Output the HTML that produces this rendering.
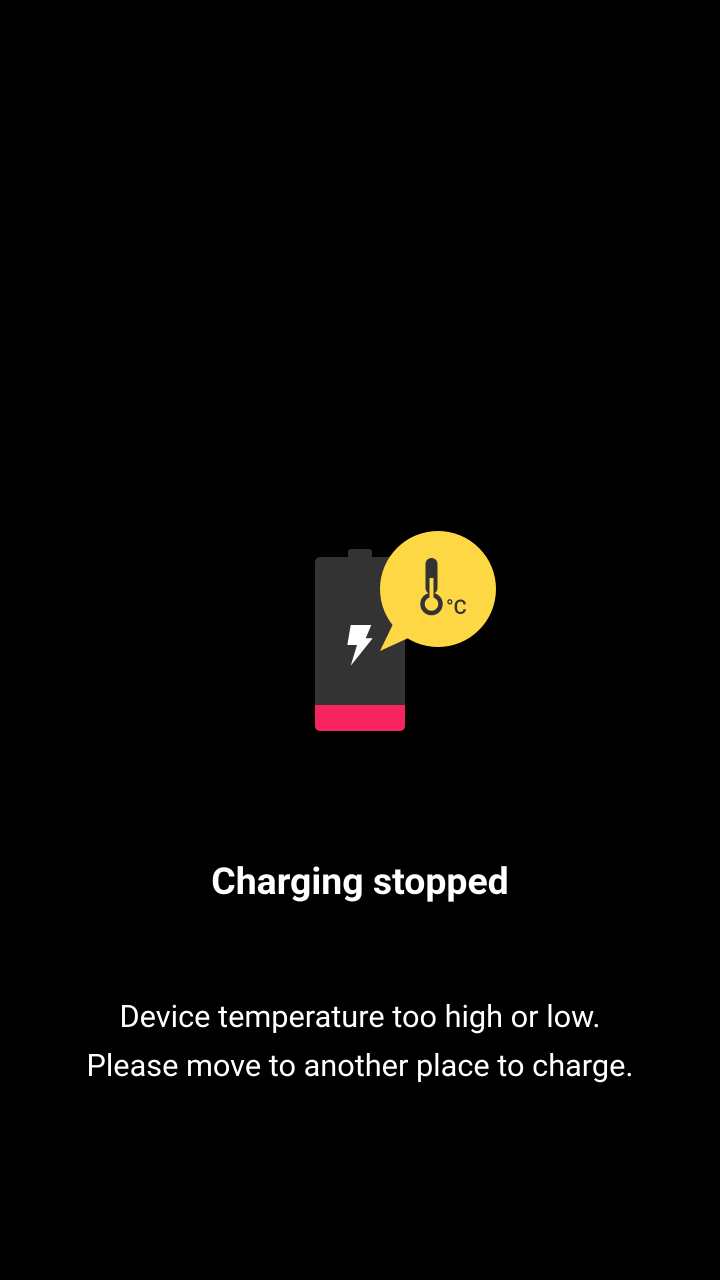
<!DOCTYPE html>
<html><head><style>
html,body{margin:0;background:#000;width:720px;height:1280px;overflow:hidden;font-family:"Roboto","Liberation Sans",sans-serif;color:#fff}
.t{position:absolute;left:0;width:720px;text-align:center}
</style></head><body>
<svg width="720" height="1280" style="position:absolute;left:0;top:0">
<rect x="348" y="549" width="24" height="14" rx="3" fill="#333"/>
<rect x="315" y="557" width="90" height="174" rx="5" fill="#333"/>
<path d="M315 705H405V726a5 5 0 0 1-5 5H320a5 5 0 0 1-5-5Z" fill="#f7245d"/>
<path d="M350.7 625L371.3 625L365.7 638.3L372.7 638.3L350.7 665.7L357 645L347.3 645Z" fill="#fff"/>
<circle cx="438" cy="589" r="58" fill="#fdd744"/>
<path d="M380 651L395 620L415 635Z" fill="#fdd744"/>
<rect x="425.5" y="558" width="12" height="36" rx="6" fill="#333"/>
<circle cx="431.5" cy="604" r="9" fill="none" stroke="#333" stroke-width="4.5"/>
<rect x="429.5" y="578" width="4" height="22" fill="#fdd744"/>
<text x="446" y="614" font-size="20" font-weight="500" fill="#333">°C</text>
</svg>
<div class="t" style="top:860px;font-size:37.4px;font-weight:bold">Charging stopped</div>
<div class="t" style="top:993px;font-size:30.7px;line-height:49px">Device temperature too high or low.<br>Please move to another place to charge.</div>
</body></html>
